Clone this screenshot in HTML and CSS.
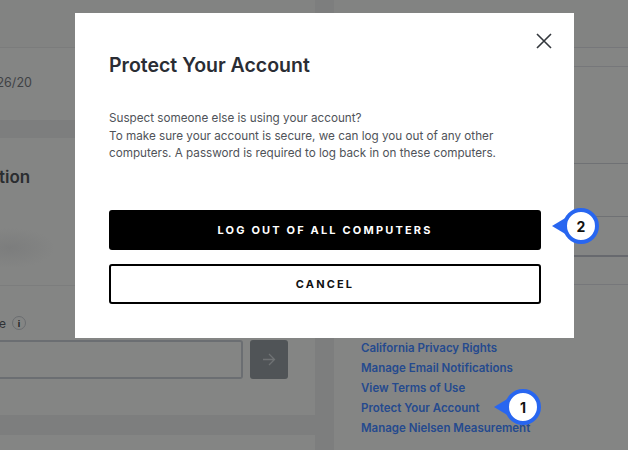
FILE: index.html
```html
<!DOCTYPE html>
<html lang="en">
<head>
<meta charset="utf-8">
<title>Protect Your Account</title>
<link rel="stylesheet" href="styles.css">
</head>
<body>
<div class="page">
  <main class="left">
    <section class="card-top"></section>
    <section class="card-date"><span class="date">26/20</span></section>
    <section class="card-form">
      <h2 class="section-title">tion</h2>
      <div class="blur-row"></div>
      <div class="label-row">
        <span class="label">e</span>
        <span class="info">i</span>
      </div>
      <div class="input-row">
        <div class="input"></div>
        <div class="go">
          <svg width="14" height="13" viewBox="0 0 14 13" fill="none" stroke="#6f7274" stroke-width="1.3"><path d="M1 6.500H12.500M7 1l5.500 5.500L7 12"/></svg>
        </div>
      </div>
    </section>
    <section class="card-bottom"></section>
  </main>
  <aside class="right">
    <div class="r-a"></div>
    <div class="r-b"></div>
    <div class="r-c"></div>
    <div class="r-f"></div>
    <div class="r-d"></div>
    <div class="r-e"></div>
    <nav class="links">
      <a>California Privacy Rights</a>
      <a>Manage Email Notifications</a>
      <a>View Terms of Use</a>
      <a>Protect Your Account</a>
      <a>Manage Nielsen Measurement</a>
    </nav>
  </aside>
</div>

<div class="modal">
  <svg class="close" width="16" height="16" viewBox="0 0 16 16" fill="none" stroke="#33373d" stroke-width="1.6"><path d="M1 1l14 14M15 1 1 15"/></svg>
  <h1 class="title">Protect Your Account</h1>
  <p class="body">Suspect someone else is using your account?<br>To make sure your account is secure, we can log you out of any other<br>computers. A password is required to log back in on these computers.</p>
  <button class="btn btn-dark">LOG OUT OF ALL COMPUTERS</button>
  <button class="btn btn-light">CANCEL</button>
</div>

<div class="callout callout-two"><span class="tip"></span><span class="num">2</span></div>
<div class="callout callout-one"><span class="tip"></span><span class="num">1</span></div>
</body>
</html>
```
FILE: styles.css
```css
* { box-sizing: border-box; }
html, body { margin: 0; padding: 0; }
body {
  width: 628px;
  height: 450px;
  overflow: hidden;
  position: relative;
  background: #7d7e7e;
  font-family: Inter, "Liberation Sans", sans-serif;
}
.page { display: flex; height: 450px; gap: 19px; }

.left { width: 315px; display: flex; flex-direction: column; }
.card-top { height: 48px; background: #828382; border-bottom: 1px solid #7b7c7c; }
.card-date { height: 72px; background: #848584; display: flex; align-items: center; padding-bottom: 4px; }
.date { margin-left: -3.500px; font-size: 12.500px; color: #3f4245; }
.card-form { margin-top: 18px; height: 277px; background: #848584; padding-top: 29px; }
.section-title { margin: 0 0 0 -1px; font-size: 17px; line-height: 20px; font-weight: 600; color: #2a2d30; }
.blur-row { margin-top: 31px; height: 68px; border-bottom: 1px solid #7c7d7d; background: radial-gradient(ellipse 45px 20px at 10px 30px, #7c7d7d, #848584); }
.label-row { margin-top: 29px; display: flex; align-items: center; gap: 6px; height: 16px; margin-left: -1px; }
.label { font-size: 12px; color: #2f3235; }
.info { width: 14px; height: 14px; border: 1px solid #6a6d70; border-radius: 50%; font-size: 9px; font-weight: 700; color: #1f2123; display: flex; align-items: center; justify-content: center; }
.input-row { margin-top: 9px; display: flex; gap: 7px; height: 39px; }
.input { width: 243px; border: 2px solid #6b6e72; border-left: 0; border-radius: 0 3px 3px 0; }
.go { width: 38px; background: #505457; border-radius: 3px; display: flex; align-items: center; justify-content: center; }
.card-bottom { margin-top: 20px; flex: 1; background: #848584; }

.right { flex: 1; background: #848584; }
.r-a { height: 48px; background: #828382; border-bottom: 1px solid #76777a; }
.r-b { height: 19px; border-bottom: 1px solid #76777a; }
.r-c { height: 97px; border-bottom: 1px solid #6f7174; }
.r-f { height: 53px; border-bottom: 1px solid #6f7174; }
.r-d { height: 40px; border-bottom: 2px solid #67696e; }
.r-e { height: 28px; border-bottom: 1px solid #76777a; }
.links { display: flex; flex-direction: column; padding: 53px 0 0 27px; }
.links a { height: 20px; line-height: 20px; font-size: 11.500px; font-weight: 600; color: #254a8e; white-space: nowrap; }

.modal {
  position: absolute;
  left: 75px;
  top: 13px;
  width: 499px;
  height: 325px;
  background: #fff;
  padding: 39px 33px 0 34px;
  display: flex;
  flex-direction: column;
}
.close { position: absolute; left: 461px; top: 20px; }
.title { margin: 0; font-size: 19.500px; line-height: 26px; font-weight: 600; color: #2a2d34; }
.body { margin: 32px 0 0; font-size: 11.700px; line-height: 17.500px; color: #4f5359; white-space: nowrap; }
.btn {
  display: block;
  width: 432px;
  height: 40px;
  border-radius: 3px;
  font-family: inherit;
  font-size: 11px;
  font-weight: 700;
  letter-spacing: 2.170px;
  padding: 0;
}
.btn-dark { margin-top: 47px; background: #000; color: #fff; border: 0; }
.btn-light { margin-top: 14px; background: #fff; color: #111; border: 2px solid #000; }

.callout {
  position: absolute;
  width: 36px;
  height: 36px;
  background: #fff;
  border: 4px solid #2866f0;
  border-radius: 50%;
  display: flex;
  align-items: center;
  justify-content: center;
}
.callout-two { left: 563px; top: 208px; }
.callout-one { left: 505px; top: 389px; }
.tip {
  position: absolute;
  left: -15px;
  top: 5px;
  width: 0;
  height: 0;
  border-top: 9px solid transparent;
  border-bottom: 9px solid transparent;
  border-right: 15px solid #2866f0;
}
.num { font-size: 14px; font-weight: 700; color: #111; }
```
